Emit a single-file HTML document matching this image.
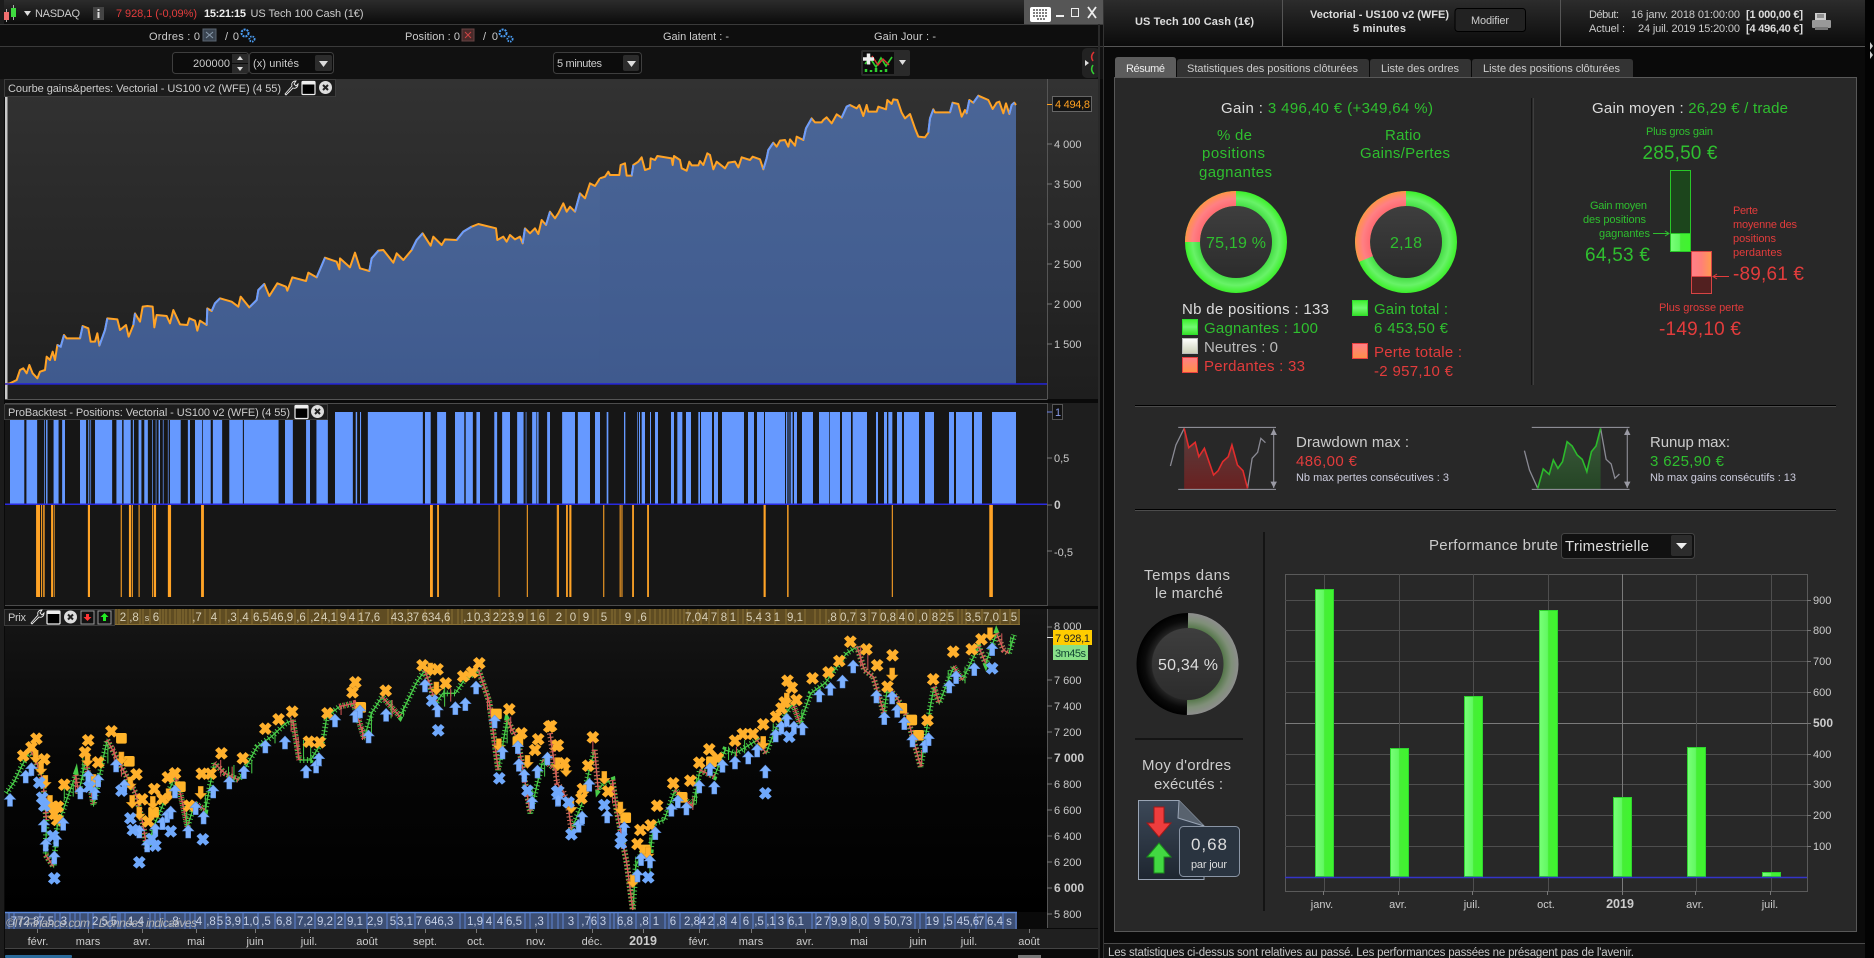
<!DOCTYPE html>
<html lang="fr"><head><meta charset="utf-8"><title>ProBacktest</title>
<style>
html,body{margin:0;padding:0;background:#0a0a0a;overflow:hidden}
svg{display:block}
text{font-family:"Liberation Sans",Arial,sans-serif;font-size:11px;fill:#ccc}
.s11{font-size:11px}.s14{font-size:15px}.s15{font-size:16px}.s19{font-size:19px}
.b{font-weight:bold}.g{fill:#2fbf2f}.r{fill:#e23c3c}.w{fill:#ddd}.o{fill:#ffa020}
.ax{fill:#c9c9c9;font-size:11px}.bt{fill:#d8d0b8;font-size:11.5px;text-anchor:middle}.bb{fill:#c4cfe6;font-size:11.5px;text-anchor:middle}
.m{text-anchor:middle}
.ns{vector-effect:non-scaling-stroke}
</style></head><body>
<svg xmlns="http://www.w3.org/2000/svg" width="1874" height="958" viewBox="0 0 1874 958">
<defs>
<linearGradient id="hd" x1="0" y1="0" x2="0" y2="1"><stop offset="0" stop-color="#2c2c2c"/><stop offset="1" stop-color="#0b0b0b"/></linearGradient>
<linearGradient id="p1" x1="0" y1="0" x2="0" y2="1"><stop offset="0" stop-color="#323232"/><stop offset="1" stop-color="#1e1e1e"/></linearGradient>
<linearGradient id="p3" x1="0" y1="0" x2="0" y2="1"><stop offset="0" stop-color="#161616"/><stop offset=".5" stop-color="#060606"/><stop offset="1" stop-color="#000"/></linearGradient>
<linearGradient id="ar" x1="0" y1="0" x2="0" y2="1"><stop offset="0" stop-color="#4a6596"/><stop offset="1" stop-color="#3f5a8e"/></linearGradient>
<linearGradient id="bar" x1="0" y1="0" x2="1" y2="0"><stop offset="0" stop-color="#78ff78"/><stop offset=".45" stop-color="#62f862"/><stop offset=".5" stop-color="#46ee36"/><stop offset="1" stop-color="#3ff52e"/></linearGradient>
<linearGradient id="rb" x1="0" y1="0" x2="1" y2="0"><stop offset="0" stop-color="#ff8088"/><stop offset=".5" stop-color="#ff8078"/><stop offset="1" stop-color="#ff9a50"/></linearGradient>
<linearGradient id="sqg" x1="0" y1="0" x2="0" y2="1"><stop offset="0" stop-color="#3ff02e"/><stop offset=".5" stop-color="#72f872"/><stop offset="1" stop-color="#38e028"/></linearGradient>
<linearGradient id="sqw" x1="0" y1="0" x2="0" y2="1"><stop offset="0" stop-color="#fff"/><stop offset="1" stop-color="#ccd0b8"/></linearGradient>
<linearGradient id="sqr" x1="0" y1="0" x2="0" y2="1"><stop offset="0" stop-color="#ff8088"/><stop offset="1" stop-color="#ff9048"/></linearGradient>
<radialGradient id="dg" gradientUnits="userSpaceOnUse" cx="0" cy="0" r="51"><stop offset=".7" stop-color="#44dc44"/><stop offset=".85" stop-color="#68f268"/><stop offset="1" stop-color="#3cf02a"/></radialGradient>
<radialGradient id="dr" gradientUnits="userSpaceOnUse" cx="0" cy="0" r="51"><stop offset=".7" stop-color="#ff6a72"/><stop offset=".85" stop-color="#ff8084"/><stop offset="1" stop-color="#ff9448"/></radialGradient>
<radialGradient id="dk" gradientUnits="userSpaceOnUse" cx="0" cy="0" r="51"><stop offset=".7" stop-color="#252525"/><stop offset=".85" stop-color="#0a0a0a"/><stop offset="1" stop-color="#000"/></radialGradient>
<radialGradient id="dm" gradientUnits="userSpaceOnUse" cx="0" cy="0" r="51"><stop offset=".7" stop-color="#55774a"/><stop offset=".85" stop-color="#7f8f78"/><stop offset="1" stop-color="#8e8e8e"/></radialGradient>
<linearGradient id="in" x1="0" y1="0" x2="0" y2="1"><stop offset="0" stop-color="#3e3e3e"/><stop offset="1" stop-color="#2c2c2c"/></linearGradient>
<linearGradient id="ddf" x1="0" y1="0" x2="0" y2="1"><stop offset="0" stop-color="#554040"/><stop offset="1" stop-color="#6a2020"/></linearGradient>
<linearGradient id="ruf" x1="0" y1="0" x2="0" y2="1"><stop offset="0" stop-color="#3c5a3c"/><stop offset="1" stop-color="#254525"/></linearGradient>
<linearGradient id="doc" x1="0" y1="0" x2="0" y2="1"><stop offset="0" stop-color="#3c4858"/><stop offset="1" stop-color="#1e2630"/></linearGradient>
<path id="ox" d="M-8-9L8 9M-8 9L8-9" stroke="#ffb02c" stroke-width="14" stroke-linecap="square" fill="none"/>
<path id="bx" d="M-8-9L8 9M-8 9L8-9" stroke="#6fa8fb" stroke-width="14" stroke-linecap="square" fill="none"/>
<path id="up" d="M0-20L16-2H7V19H-7V-2H-16Z" fill="#7db1ff" stroke="#5a8fe0" stroke-width="1.500"/>
<path id="dn" d="M0 20L16 2H7V-19H-7V2H-16Z" fill="#ffb02c" stroke="#d8941c" stroke-width="1.500"/>
<rect id="sq" x="-15" y="-16" width="30" height="32" rx="5" fill="#ffb42a"/>
<g id="cl"><circle r="6.500" fill="#ddd"/><path d="M-2.500-2.500L2.500 2.500M-2.500 2.500L2.500-2.500" stroke="#222" stroke-width="2"/></g>
<g id="wn"><rect x="-6.500" y="-6.500" width="13" height="13" rx="1" fill="#000" stroke="#eee" stroke-width="1.200"/><rect x="-6.500" y="-6.500" width="13" height="3" fill="#eee"/></g>
<path id="wr" d="M-6 6L1-2C0-5 2-7 5-7L3-4 5-2 7-4C7-1 5 1 2 0L-5 7Z" fill="none" stroke="#eee" stroke-width=".9"/>
<g id="ge"><circle cx="-3" cy="-2" r="3.500" fill="none" stroke="#4a9cf2" stroke-width="2" stroke-dasharray="2 1"/><circle cx="4" cy="4" r="2.600" fill="none" stroke="#4a9cf2" stroke-width="1.800" stroke-dasharray="1.500 1"/></g>
</defs>

<rect width="1874" height="958" fill="#0a0a0a"/>

<!-- LEFT WINDOW -->
<rect x="0" y="0" width="1104" height="24" fill="url(#hd)"/>
<rect x="0" y="0" width="4" height="958" fill="#1c1c1c"/>
<path d="M6.500 9V22M13.500 5V20" stroke="#aaa"/><rect x="4" y="12" width="5" height="8" fill="#f07070"/><rect x="11" y="8" width="5" height="9" fill="#3fd93f"/>
<path d="M24 11h7l-3.500 5z" fill="#ddd"/>
<text x="35" y="17" class="s11" textLength="45">NASDAQ</text>
<rect x="93" y="7" width="11" height="13" fill="#444"/><rect x="97.500" y="9" width="2" height="2" fill="#ddd"/><rect x="97.500" y="12" width="2" height="6" fill="#ddd"/>
<text x="116" y="17" class="s11 r" textLength="81">7 928,1 (-0,09%)</text>
<text x="204" y="17" class="s11 b" textLength="42" style="fill:#eee">15:21:15</text>
<text x="250.500" y="17" class="s11" textLength="113">US Tech 100 Cash (1€)</text>
<rect x="1024" y="0" width="80" height="24" fill="#565656"/>
<rect x="1030" y="7" width="21" height="15" rx="2" fill="#fff"/><path d="M1033 10h15M1033 13h15M1033 16h15M1037 19h8" stroke="#555" stroke-width="1.500" stroke-dasharray="2 1"/>
<rect x="1056" y="15" width="8" height="2" fill="#eee"/><rect x="1071.500" y="8.500" width="7" height="8" fill="none" stroke="#eee"/>
<path d="M1088 7L1096 18M1096 7L1088 18" stroke="#eee" stroke-width="1.800"/>

<path d="M0 24.500H1104M0 46.500H1104" stroke="#3a3a3a"/>
<rect x="0" y="25" width="1104" height="21" fill="#0e0e0e"/>
<rect x="0" y="47" width="1104" height="32" fill="#111"/>
<text x="149" y="40" textLength="51">Ordres : 0</text>
<rect x="203" y="29" width="13" height="12" fill="#3a4450" stroke="#5a6470"/><path d="M206 32l7 6M213 32l-7 6" stroke="#89a"/>
<text x="225" y="40" textLength="14">/ 0</text><use href="#ge" x="248" y="35"/>
<text x="405" y="40" textLength="55">Position : 0</text>
<rect x="462" y="29" width="12" height="12" fill="#4a2a2a" stroke="#644"/><path d="M465 32l6 6M471 32l-6 6" stroke="#c44"/>
<text x="483" y="40" textLength="15">/ 0</text><use href="#ge" x="506" y="35"/>
<text x="663" y="40" textLength="66">Gain latent : -</text>
<text x="874" y="40" textLength="62">Gain Jour : -</text>

<rect x="172.500" y="52.500" width="76" height="21" rx="3" fill="#0c0c0c" stroke="#3e3e3e"/>
<text x="193" y="67" textLength="37">200000</text>
<rect x="232" y="54" width="16" height="9" fill="#2a2a2a"/><rect x="232" y="64" width="16" height="9" fill="#2a2a2a"/>
<path d="M237 60l3-4 3 4zM237 67l3 4 3-4z" fill="#ddd"/>
<rect x="249.500" y="52.500" width="84" height="21" rx="3" fill="#0c0c0c" stroke="#3e3e3e"/>
<text x="253" y="67" textLength="46">(x) unités</text>
<rect x="315" y="55" width="17" height="16" rx="2" fill="#2c2c2c"/><path d="M319 61h9l-4.500 6z" fill="#ddd"/>
<rect x="553.500" y="52.500" width="88" height="21" rx="3" fill="#0c0c0c" stroke="#3e3e3e"/>
<text x="557" y="67" textLength="45">5 minutes</text>
<rect x="623" y="55" width="16" height="16" rx="2" fill="#2c2c2c"/><path d="M627 61h9l-4.500 6z" fill="#ddd"/>
<rect x="861" y="50" width="49" height="26" rx="2" fill="#2a2a2a"/>
<rect x="863" y="52" width="31" height="22" fill="#0c0c0c"/>
<path d="M865 64l5-6 6 9 5-9 5 8 6-9" stroke="#2fcf2f" fill="none" stroke-width="1.600"/><path d="M872 56l6 9 5-6 6 6" stroke="#d33" fill="none" stroke-width="1.400"/>
<path d="M866 72v-3M871 72v-2M876 72v-4M881 72v-2M886 72v-3" stroke="#2fcf2f" stroke-width="2.500"/>
<path d="M863 59h11M868.500 53.500v11" stroke="#eee" stroke-width="3.500"/>
<path d="M899 60h7l-3.500 5z" fill="#ddd"/>
<rect x="1082" y="48" width="18" height="30" rx="5" fill="#222"/>
<path d="M1089 63l-4-3v6z" fill="#ddd"/><path d="M1094 52c-3 3-3 6-1 9" stroke="#d33" fill="none" stroke-width="1.500"/><path d="M1094 74c-3-3-3-6-1-9" stroke="#3c3" fill="none" stroke-width="1.500"/>

<!-- CHART 1 -->
<rect x="5" y="79" width="1093" height="320" fill="url(#p1)"/>
<rect x="5" y="97" width="2.500" height="302" fill="#c8c8c8"/>
<path d="M1047.500 79V399M5 399.500H1047.500" stroke="#555" fill="none"/>
<g transform="translate(0,80) scale(.33333)">
<polygon fill="url(#ar)" points="15,913 30,910 50,900 60,870 70,865 80,880 88,855 98,880 112,895 120,875 135,870 140,830 150,840 158,815 165,840 172,795 182,800 192,765 200,775 240,775 248,738 265,745 272,785 285,785 292,760 298,797 315,750 322,715 352,718 360,750 378,735 386,770 400,735 405,700 420,725 428,680 442,678 458,680 463,742 470,705 500,708 510,730 520,690 540,733 562,735 568,715 585,722 592,752 600,722 620,735 622,685 635,693 645,670 660,655 695,665 715,680 722,650 748,682 770,660 775,630 793,612 808,648 832,610 858,620 862,632 877,592 918,603 925,578 950,592 975,533 1010,545 1018,568 1020,535 1050,562 1065,518 1080,565 1108,573 1115,535 1135,512 1150,510 1180,548 1190,520 1210,540 1235,510 1250,480 1268,460 1292,497 1300,470 1325,495 1335,478 1370,480 1390,455 1415,440 1435,432 1488,445 1492,480 1510,470 1520,485 1530,465 1545,478 1560,470 1568,490 1575,445 1590,460 1605,445 1615,462 1625,420 1638,435 1650,395 1665,415 1675,400 1690,370 1700,395 1710,380 1725,395 1740,340 1755,355 1770,310 1785,318 1800,295 1800,913"/>
<polyline fill="none" stroke="#ffa326" stroke-width="6" stroke-linejoin="round" points="15,913 30,910 50,900 60,870 70,865 80,880 88,855 98,880 112,895 120,875 135,870 140,830 150,840 158,815 165,840 172,795 182,800 192,765 200,775 240,775 248,738 265,745 272,785 285,785 292,760 298,797 315,750 322,715 352,718 360,750 378,735 386,770 400,735 405,700 420,725 428,680 442,678 458,680 463,742 470,705 500,708 510,730 520,690 540,733 562,735 568,715 585,722 592,752 600,722 620,735 622,685 635,693 645,670 660,655 695,665 715,680 722,650 748,682 770,660 775,630 793,612 808,648 832,610 858,620 862,632 877,592 918,603 925,578 950,592 975,533 1010,545 1018,568 1020,535 1050,562 1065,518 1080,565 1108,573 1115,535 1135,512 1150,510 1180,548 1190,520 1210,540 1235,510 1250,480 1268,460 1292,497 1300,470 1325,495 1335,478 1370,480 1390,455 1415,440 1435,432 1488,445 1492,480 1510,470 1520,485 1530,465 1545,478 1560,470 1568,490 1575,445 1590,460 1605,445 1615,462 1625,420 1638,435 1650,395 1665,415 1675,400 1690,370 1700,395 1710,380 1725,395 1740,340 1755,355 1770,310 1785,318 1800,295"/>
<path fill="none" stroke="#6a9cff" stroke-width="6" d="M172 795L182 800 192 765M240 775L248 738M298 797L315 750 322 715M400 735L405 700M620 735L622 685M635 693L645 670 660 655M750 680L770 660 775 630 793 612M950 592L975 533M1108 573L1115 535 1135 512M1235 510L1250 480 1268 460M1370 480L1390 455 1415 440M1568 490L1575 445M1638 435L1650 395M1725 395L1740 340"/>
<polygon transform="translate(1800,0)" fill="url(#ar)" points="0,295 15,290 25,275 30,285 58,285 62,255 75,250 80,287 95,287 100,255 115,245 125,232 135,270 150,265 152,235 165,240 172,228 215,235 218,255 222,228 240,240 245,265 260,272 268,245 275,256 295,256 300,243 310,255 322,220 330,225 340,268 350,245 375,265 385,248 405,245 415,262 425,232 450,240 458,230 480,238 490,268 500,235 505,210 520,188 530,200 540,182 555,180 565,200 570,178 585,197 590,170 610,180 618,145 635,115 645,127 665,127 670,120 680,112 695,130 710,103 725,113 740,80 750,75 770,85 778,75 790,108 800,75 805,95 830,95 835,80 858,88 862,60 875,72 880,58 892,60 905,98 915,115 930,102 945,145 955,170 975,172 985,158 990,115 1000,88 1005,97 1050,97 1058,68 1075,72 1085,110 1095,90 1100,100 1108,60 1120,68 1135,47 1165,60 1178,87 1190,68 1198,65 1210,100 1218,70 1228,102 1235,75 1243,68 1248,75 1248,913 0,913"/>
<polyline transform="translate(1800,0)" fill="none" stroke="#ffa326" stroke-width="6" stroke-linejoin="round" points="0,295 15,290 25,275 30,285 58,285 62,255 75,250 80,287 95,287 100,255 115,245 125,232 135,270 150,265 152,235 165,240 172,228 215,235 218,255 222,228 240,240 245,265 260,272 268,245 275,256 295,256 300,243 310,255 322,220 330,225 340,268 350,245 375,265 385,248 405,245 415,262 425,232 450,240 458,230 480,238 490,268 500,235 505,210 520,188 530,200 540,182 555,180 565,200 570,178 585,197 590,170 610,180 618,145 635,115 645,127 665,127 670,120 680,112 695,130 710,103 725,113 740,80 750,75 770,85 778,75 790,108 800,75 805,95 830,95 835,80 858,88 862,60 875,72 880,58 892,60 905,98 915,115 930,102 945,145 955,170 975,172 985,158 990,115 1000,88 1005,97 1050,97 1058,68 1075,72 1085,110 1095,90 1100,100 1108,60 1120,68 1135,47 1165,60 1178,87 1190,68 1198,65 1210,100 1218,70 1228,102 1235,75 1243,68 1248,75"/>
<path transform="translate(1800,0)" fill="none" stroke="#6a9cff" stroke-width="6" d="M95 287L100 255M490 268L500 235 505 210 520 188M610 180L618 145 635 115M725 113L740 80 750 75M985 158L990 115 1000 88M1050 97L1058 68M1100 100L1108 60M1120 68L1135 47M1228 102L1235 75 1243 68"/>
</g>
<rect x="5" y="383.200" width="1042" height="1.500" fill="#2424d8"/>
<rect x="4.500" y="79.500" width="331" height="17" fill="#1c1c1c" stroke="#3c3c3c"/>
<text x="8" y="92" textLength="273">Courbe gains&amp;pertes: Vectorial - US100 v2 (WFE) (4 55)</text>
<use href="#wr" x="291" y="88"/><use href="#wn" x="308.500" y="88"/><use href="#cl" x="325.500" y="87.500"/>
<path d="M1047 144h5M1047 184h5M1047 224h5M1047 264h5M1047 304h5M1047 344h5" stroke="#777"/>
<text x="1054" y="148" class="ax">4 000</text><text x="1054" y="188" class="ax">3 500</text><text x="1054" y="228" class="ax">3 000</text><text x="1054" y="268" class="ax">2 500</text><text x="1054" y="308" class="ax">2 000</text><text x="1054" y="348" class="ax">1 500</text>
<path d="M1047 104.500h5" stroke="#ffa020"/>
<rect x="1052.500" y="96.500" width="39" height="15" fill="#141414" stroke="#666"/>
<text x="1055" y="108" class="o" textLength="35">4 494,8</text>

<!-- CHART 2 -->
<rect x="5" y="403" width="1043" height="203" fill="#161616"/>
<rect x="1048" y="403" width="50" height="203" fill="#1e1e1e"/>
<path d="M5 403.500H1047.500V605.500H5" stroke="#4c4c4c" fill="none"/>
<g transform="scale(.35714,1)" fill="none" stroke="#6699ff" stroke-width="92">
<path d="M28 458H68M74 458H104M124 458H126M129 458H133M150 458H164M174 458H182M224 458H241M247 458H250M253 458H255M266 458H314M326 458H342M346 458H366M372 458H375M388 458H396M404 458H414M426 458H428M436 458H438M444 458H448M456 458H458M470 458H472M476 458H506M526 458H532M546 458H566M568 458H590M596 458H622M642 458H680M683 458H780M798 458H820M857 458H868M886 458H918M938 458H988M996 458H1000M1008 458H1011M1030 458H1184M1190 458H1206M1224 458H1249M1274 458H1300M1304 458H1324M1334 458H1344M1384 458H1392M1406 458H1428M1448 458H1466M1472 458H1474M1490 458H1502M1504 458H1508M1532 458H1540M1574 458H1610M1618 458H1652M1666 458H1680"/>
</g>
<g transform="translate(600,0) scale(.33333,1)" fill="none" stroke="#6699ff" stroke-width="92">
<path d="M20 458H25M72 458H76M112 458H114M117 458H120M125 458H135M150 458H153M165 458H174M213 458H222M232 458H247M258 458H273M295 458H300M303 458H336M342 458H354M366 458H432M444 458H462M471 458H492M495 458H555M558 458H562M566 458H568M572 458H578M582 458H591M606 458H639M657 458H688M690 458H720M726 458H753M758 458H801M828 458H834M852 458H861M865 458H877M891 458H906M912 458H957M975 458H1002M1047 458H1062M1068 458H1116M1122 458H1146M1176 458H1248"/>
</g>
<g transform="scale(.35714,1)" fill="none" stroke="#ffa326" stroke-width="92">
<path d="M101 551H112M115 551H118M121 551H125M143 551H149M151 551H153M246 551H252M338 551H341M361 551H367M369 551H372M388 551H391M426 551H429M431 551H437M470 551H479M563 551H571M1204 551H1212M1224 551H1229M1396 551H1399M1475 551H1478M1562 551H1565"/>
</g>
<g transform="translate(550,0) scale(.35714,1)" fill="none" stroke="#ffa326" stroke-width="92">
<path d="M19 551H22M45 551H50M54 551H60M149 551H152M195 551H198M200 551H203M230 551H235M272 551H277M598 551H604M664 551H668M957 551H960M1230 551H1240"/>
</g>
<rect x="5" y="503.500" width="1042" height="1.500" fill="#2a2ae0"/>
<rect x="4.500" y="404.500" width="323" height="15" fill="#1c1c1c" stroke="#3c3c3c"/>
<text x="8" y="416" textLength="282">ProBacktest - Positions: Vectorial - US100 v2 (WFE) (4 55)</text>
<use href="#wn" x="301.500" y="412"/><use href="#cl" x="317.500" y="411.500"/>
<rect x="1052.500" y="404.500" width="10" height="15" fill="#111" stroke="#555"/><text x="1055" y="416" style="fill:#8a9ce8">1</text>
<path d="M1047 412h5" stroke="#6a80e0"/>
<text x="1054" y="462" class="ax">0,5</text><text x="1054" y="509" class="ax b" style="font-size:12px">0</text><text x="1054" y="556" class="ax">-0,5</text>
<path d="M1047 458h5M1047 505h5M1047 551h5" stroke="#777"/>

<!-- CHART 3 -->
<rect x="5" y="609" width="1042" height="303" fill="url(#p3)"/>
<rect x="1048" y="609" width="50" height="319" fill="#1f1f1f"/>
<path d="M1047.500 609V928" stroke="#555"/>
<rect x="115" y="609" width="905" height="16" fill="#5f4c22"/>
<path d="M115 624.500H1020" stroke="#8a7034"/>
<path stroke="#8a7034" d="M116 609v16M119 609v16M128 609v16M140 609v16M143 609v16M150 609v16M160 609v16M163 609v16M166 609v16M170 609v16M175 609v16M178 609v16M180 609v16M183 609v16M186 609v16M190 609v16M193 609v16M205 609v16M210 609v16M220 609v16M226 609v16M238 609v16M252 609v16M270 609v16M295 609v16M308 609v16M322 609v16M337 609v16M348 609v16M358 609v16M362 609v16M388 609v16M392 609v16M408 609v16M425 609v16M448 609v16M452 609v16M458 609v16M462 609v16M475 609v16M490 609v16M500 609v16M510 609v16M527 609v16M538 609v16M548 609v16M566 609v16M579 609v16M593 609v16M598 609v16M612 609v16M615 609v16M620 609v16M635 609v16M650 609v16M655 609v16M660 609v16M664 609v16M668 609v16M673 609v16M676 609v16M680 609v16M684 609v16M688 609v16M698 609v16M701 609v16M709 609v16M718 609v16M728 609v16M738 609v16M743 609v16M747 609v16M760 609v16M775 609v16M786 609v16M805 609v16M815 609v16M820 609v16M826 609v16M840 609v16M856 609v16M869 609v16M880 609v16M897 609v16M906 609v16M916 609v16M930 609v16M940 609v16M947 609v16M958 609v16M962 609v16M966 609v16M982 609v16M1000 609v16M1010 609v16M1019 609v16"/>
<g><text class="bt" x="123" y="621">2</text><text class="bt" x="134" y="621">,8</text><text class="bt" x="147" y="621" style="font-size:9px">s</text><text class="bt" x="156" y="621">6</text><text class="bt" x="197" y="621">,7</text><text class="bt" x="214" y="621">4</text><text class="bt" x="232" y="621">,3</text><text class="bt" x="244" y="621">,4</text><text class="bt" x="261" y="621">6,5</text><text class="bt" x="282" y="621">46,9</text><text class="bt" x="301" y="621">,6</text><text class="bt" x="315" y="621">,2</text><text class="bt" x="329" y="621">4,1</text><text class="bt" x="343" y="621">9</text><text class="bt" x="352" y="621">4</text><text class="bt" x="369" y="621">17,6</text><text class="bt" x="402" y="621">43,3</text><text class="bt" x="416" y="621">7</text><text class="bt" x="436" y="621">634,6</text><text class="bt" x="468" y="621">,1</text><text class="bt" x="482" y="621">0,3</text><text class="bt" x="496" y="621">2</text><text class="bt" x="504" y="621">2</text><text class="bt" x="516" y="621">3,9</text><text class="bt" x="533" y="621">1</text><text class="bt" x="542" y="621">6</text><text class="bt" x="559" y="621">2</text><text class="bt" x="573" y="621">0</text><text class="bt" x="586" y="621">9</text><text class="bt" x="604" y="621">5</text><text class="bt" x="628" y="621">9</text><text class="bt" x="642" y="621">,6</text><text class="bt" x="693" y="621">7,0</text><text class="bt" x="705" y="621">4</text><text class="bt" x="714" y="621">7</text><text class="bt" x="724" y="621">8</text><text class="bt" x="733" y="621">1</text><text class="bt" x="754" y="621">5,4</text><text class="bt" x="768" y="621">3</text><text class="bt" x="777" y="621">1</text><text class="bt" x="795" y="621">9,1</text><text class="bt" x="832" y="621">,8</text><text class="bt" x="848" y="621">0,7</text><text class="bt" x="863" y="621">3</text><text class="bt" x="874" y="621">7</text><text class="bt" x="888" y="621">0,8</text><text class="bt" x="902" y="621">4</text><text class="bt" x="911" y="621">0</text><text class="bt" x="923" y="621">,0</text><text class="bt" x="935" y="621">8</text><text class="bt" x="943" y="621">2</text><text class="bt" x="951" y="621">5</text><text class="bt" x="973" y="621">3,5</text><text class="bt" x="991" y="621">7,0</text><text class="bt" x="1005" y="621">1</text><text class="bt" x="1014" y="621">5</text></g>
<rect x="4.500" y="609.500" width="110" height="16" fill="#1c1c1c" stroke="#3c3c3c"/>
<text x="8" y="621" textLength="18">Prix</text>
<use href="#wr" x="37" y="617"/><use href="#wn" x="53.500" y="617.500"/><use href="#cl" x="70.500" y="617"/>
<rect x="81" y="611" width="13" height="13" fill="#111" stroke="#999"/><path d="M87.500 621l4-4h-2.500v-3h-3v3h-2.500z" fill="#f33"/>
<rect x="98" y="611" width="13" height="13" fill="#111" stroke="#999"/><path d="M104.500 613l4 4h-2.500v4h-3v-4h-2.500z" fill="#2e2"/>

<g transform="translate(0,660) scale(.35714,.33333)">
<polyline class="ns" fill="none" stroke="#48cc48" stroke-width="1.300" points="18,400 40,365 60,320 85,270 100,300 120,360 130,480 128,585 150,620 160,500 175,455 200,380 212,345 220,400 240,300 262,435 280,340 300,240 320,280 345,330 380,400 400,490 412,570 430,500 470,400 490,350 505,400 525,500 545,430 575,450 600,310 630,340 668,360 720,260 760,230 800,190 820,180 838,300 870,300 905,240 915,170 950,140 990,130 1020,235 1040,160 1070,110 1120,170 1165,70 1190,30 1220,130 1240,100 1275,100 1300,60 1340,30 1370,125 1395,330 1420,180 1450,240 1485,460 1520,300 1560,330"/>
<polyline class="ns" fill="none" stroke="#48cc48" stroke-width="6" stroke-dasharray="1 2.600" points="18,400 40,365 60,320 85,270 100,300 120,360 130,480 128,585 150,620 160,500 175,455 200,380 212,345 220,400 240,300 262,435 280,340 300,240 320,280 345,330 380,400 400,490 412,570 430,500 470,400 490,350 505,400 525,500 545,430 575,450 600,310 630,340 668,360 720,260 760,230 800,190 820,180 838,300 870,300 905,240 915,170 950,140 990,130 1020,235 1040,160 1070,110 1120,170 1165,70 1190,30 1220,130 1240,100 1275,100 1300,60 1340,30 1370,125 1395,330 1420,180 1450,240 1485,460 1520,300 1560,330"/>
<path class="ns" fill="none" stroke="#d85858" stroke-width="1.300" d="M85 270L100 300 120 360 130 480M128 585L150 620M212 345L220 400M240 300L262 435M300 240L320 280 345 330 380 400 400 490 412 570M490 350L505 400 525 500M545 430L575 450M600 310L630 340 668 360M820 180L838 300M950 140L990 130 1020 235M1070 110L1120 170M1190 30L1220 130M1340 30L1370 125 1395 330M1420 180L1450 240 1485 460M1520 300L1560 330"/>
<path class="ns" fill="none" stroke="#d85858" stroke-width="6" stroke-dasharray="1 2.600" d="M85 270L100 300 120 360 130 480M128 585L150 620M212 345L220 400M240 300L262 435M300 240L320 280 345 330 380 400 400 490 412 570M490 350L505 400 525 500M545 430L575 450M600 310L630 340 668 360M820 180L838 300M950 140L990 130 1020 235M1070 110L1120 170M1190 30L1220 130M1340 30L1370 125 1395 330M1420 180L1450 240 1485 460M1520 300L1560 330"/>
<path class="ns" fill="none" stroke="#48cc48" stroke-width="1" d="M180 380V420M205 370V410M232 290V360M262 380V440M302 250V310M522 430V510M575 400V450M640 320V370M655 315V365M705 300V340M770 215V250M850 240V300M870 250V310M1040 155V220M1095 120V175M1130 140V170M1245 70V140M1420 130V250M1490 380V430M1525 290V350"/>
<path class="ns" fill="none" stroke="#d85858" stroke-width="1" d="M212 345V400M320 260V310M340 280V350M618 300V350M650 320V360M815 170V215M835 230V300M955 135V165M1015 200V240M1098 120V170M1262 85V125M1365 100V150M1430 170V220M1558 300V370"/>
<g>
<use href="#sq" x="340" y="235"/><use href="#sq" x="362" y="304"/><use href="#sq" x="505" y="380"/><use href="#sq" x="1010" y="142"/><use href="#sq" x="1390" y="162"/><use href="#sq" x="1450" y="245"/><use href="#sq" x="430" y="457"/>
<use href="#dn" x="100" y="290"/><use href="#dn" x="115" y="325"/><use href="#dn" x="127" y="365"/><use href="#dn" x="245" y="300"/><use href="#dn" x="340" y="295"/><use href="#dn" x="365" y="370"/><use href="#dn" x="370" y="425"/><use href="#dn" x="428" y="428"/><use href="#dn" x="472" y="405"/><use href="#dn" x="562" y="398"/><use href="#dn" x="1205" y="28"/><use href="#dn" x="1222" y="85"/><use href="#dn" x="1397" y="255"/><use href="#dn" x="1477" y="305"/><use href="#dn" x="390" y="460"/><use href="#dn" x="1560" y="312"/><use href="#dn" x="140" y="425"/><use href="#dn" x="262" y="362"/>
<use href="#ox" x="102" y="236"/><use href="#ox" x="88" y="262"/><use href="#ox" x="65" y="287"/><use href="#ox" x="124" y="298"/><use href="#ox" x="180" y="374"/><use href="#ox" x="247" y="241"/><use href="#ox" x="238" y="277"/><use href="#ox" x="275" y="307"/><use href="#ox" x="312" y="214"/><use href="#ox" x="382" y="343"/><use href="#ox" x="432" y="387"/><use href="#ox" x="398" y="418"/><use href="#ox" x="490" y="340"/><use href="#ox" x="470" y="352"/><use href="#ox" x="455" y="417"/><use href="#ox" x="415" y="484"/><use href="#ox" x="530" y="437"/><use href="#ox" x="565" y="341"/><use href="#ox" x="590" y="341"/><use href="#ox" x="620" y="280"/><use href="#ox" x="680" y="295"/><use href="#ox" x="743" y="206"/><use href="#ox" x="780" y="178"/><use href="#ox" x="818" y="155"/><use href="#ox" x="865" y="245"/><use href="#ox" x="895" y="247"/><use href="#ox" x="917" y="160"/><use href="#ox" x="995" y="67"/><use href="#ox" x="987" y="97"/><use href="#ox" x="1080" y="92"/><use href="#ox" x="1183" y="16"/><use href="#ox" x="1225" y="28"/><use href="#ox" x="1248" y="70"/><use href="#ox" x="1297" y="49"/><use href="#ox" x="1322" y="37"/><use href="#ox" x="1342" y="10"/><use href="#ox" x="1426" y="148"/><use href="#ox" x="1460" y="220"/><use href="#ox" x="1507" y="238"/><use href="#ox" x="1498" y="270"/><use href="#ox" x="1538" y="200"/><use href="#ox" x="1558" y="258"/><use href="#ox" x="150" y="440"/><use href="#ox" x="162" y="440"/><use href="#ox" x="152" y="462"/><use href="#ox" x="160" y="480"/>
<use href="#up" x="28" y="420"/><use href="#up" x="72" y="350"/><use href="#up" x="88" y="328"/><use href="#up" x="123" y="497"/><use href="#up" x="128" y="555"/><use href="#up" x="152" y="593"/><use href="#up" x="157" y="540"/><use href="#up" x="177" y="492"/><use href="#up" x="225" y="398"/><use href="#up" x="247" y="350"/><use href="#up" x="265" y="400"/><use href="#up" x="275" y="362"/><use href="#up" x="325" y="317"/><use href="#up" x="348" y="378"/><use href="#up" x="390" y="515"/><use href="#up" x="412" y="557"/><use href="#up" x="435" y="510"/><use href="#up" x="455" y="490"/><use href="#up" x="468" y="468"/><use href="#up" x="478" y="458"/><use href="#up" x="490" y="395"/><use href="#up" x="527" y="515"/><use href="#up" x="548" y="445"/><use href="#up" x="570" y="473"/><use href="#up" x="597" y="395"/><use href="#up" x="642" y="368"/><use href="#up" x="683" y="337"/><use href="#up" x="743" y="260"/><use href="#up" x="798" y="248"/><use href="#up" x="857" y="335"/><use href="#up" x="885" y="320"/><use href="#up" x="893" y="298"/><use href="#up" x="938" y="182"/><use href="#up" x="995" y="168"/><use href="#up" x="1008" y="155"/><use href="#up" x="1032" y="230"/><use href="#up" x="1081" y="165"/><use href="#up" x="1190" y="77"/><use href="#up" x="1225" y="152"/><use href="#up" x="1275" y="145"/><use href="#up" x="1303" y="133"/><use href="#up" x="1333" y="83"/><use href="#up" x="1385" y="185"/><use href="#up" x="1407" y="278"/><use href="#up" x="1450" y="262"/><use href="#up" x="1453" y="315"/><use href="#up" x="1468" y="347"/><use href="#up" x="1490" y="428"/><use href="#up" x="1505" y="335"/><use href="#up" x="1533" y="296"/><use href="#up" x="1562" y="420"/>
<use href="#bx" x="110" y="368"/><use href="#bx" x="118" y="413"/><use href="#bx" x="124" y="437"/><use href="#bx" x="148" y="528"/><use href="#bx" x="152" y="655"/><use href="#bx" x="250" y="380"/><use href="#bx" x="340" y="392"/><use href="#bx" x="365" y="475"/><use href="#bx" x="372" y="510"/><use href="#bx" x="390" y="607"/><use href="#bx" x="425" y="537"/><use href="#bx" x="435" y="557"/><use href="#bx" x="478" y="514"/><use href="#bx" x="568" y="538"/><use href="#bx" x="1210" y="122"/><use href="#bx" x="1227" y="211"/><use href="#bx" x="1398" y="355"/><use href="#bx" x="1477" y="392"/><use href="#bx" x="1560" y="395"/>
</g></g>

<g transform="translate(550,590) scale(.35714,.33333)">
<polyline class="ns" fill="none" stroke="#48cc48" stroke-width="1.300" points="0,430 20,580 35,600 50,640 60,720 90,640 110,540 125,480 135,600 150,580 175,570 185,650 215,820 232,960 240,830 260,780 282,780 290,700 320,690 350,600 400,650 420,540 460,560 490,480 520,490 580,450 605,490 630,420 680,340 700,400 730,310 770,280 830,190 860,170 880,240 905,260 935,370 945,290 975,330 1000,380 1038,530 1065,350 1075,290 1090,340 1130,230 1155,270 1200,170 1220,220 1250,130 1270,180 1285,190 1300,135"/>
<polyline class="ns" fill="none" stroke="#48cc48" stroke-width="6" stroke-dasharray="1 2.600" points="0,430 20,580 35,600 50,640 60,720 90,640 110,540 125,480 135,600 150,580 175,570 185,650 215,820 232,960 240,830 260,780 282,780 290,700 320,690 350,600 400,650 420,540 460,560 490,480 520,490 580,450 605,490 630,420 680,340 700,400 730,310 770,280 830,190 860,170 880,240 905,260 935,370 945,290 975,330 1000,380 1038,530 1065,350 1075,290 1090,340 1130,230 1155,270 1200,170 1220,220 1250,130 1270,180 1285,190 1300,135"/>
<path class="ns" fill="none" stroke="#d85858" stroke-width="1.300" d="M0 430L20 580 35 600 50 640 60 720M125 480L135 600M175 570L185 650 215 820 232 960M350 600L400 650M420 540L460 560M580 450L605 490M680 340L700 400M860 170L880 240 905 260 935 370M945 290L975 330 1000 380 1038 530M1075 290L1090 340M1130 230L1155 270M1200 170L1220 220M1250 130L1270 180 1285 190"/>
<path class="ns" fill="none" stroke="#d85858" stroke-width="6" stroke-dasharray="1 2.600" d="M0 430L20 580 35 600 50 640 60 720M125 480L135 600M175 570L185 650 215 820 232 960M350 600L400 650M420 540L460 560M580 450L605 490M680 340L700 400M860 170L880 240 905 260 935 370M945 290L975 330 1000 380 1038 530M1075 290L1090 340M1130 230L1155 270M1200 170L1220 220M1250 130L1270 180 1285 190"/>
<path class="ns" fill="none" stroke="#48cc48" stroke-width="1" d="M240 800V860M280 740V850M410 560V640M500 470V510M545 450V490M625 400V450M705 360V400M1115 240V300M1162 230V280M1290 140V175"/>
<path class="ns" fill="none" stroke="#d85858" stroke-width="1" d="M120 450V490M175 570V640M400 620V660M522 470V500M870 170V230M890 180V240M1040 480V530M1265 130V170"/>
<use href="#sq" x="452" y="515"/><use href="#sq" x="370" y="622"/><use href="#sq" x="212" y="683"/><use href="#sq" x="266" y="780"/><use href="#sq" x="985" y="355"/><use href="#sq" x="1013" y="390"/><use href="#sq" x="1032" y="436"/>
<use href="#dn" x="22" y="522"/><use href="#dn" x="45" y="540"/><use href="#dn" x="60" y="650"/><use href="#dn" x="152" y="563"/><use href="#dn" x="197" y="655"/><use href="#dn" x="232" y="873"/><use href="#dn" x="597" y="458"/><use href="#dn" x="663" y="328"/><use href="#dn" x="958" y="253"/><use href="#dn" x="1232" y="132"/><use href="#dn" x="275" y="790"/>
<use href="#ox" x="3" y="408"/><use href="#ox" x="22" y="466"/><use href="#ox" x="40" y="520"/><use href="#ox" x="107" y="527"/><use href="#ox" x="120" y="442"/><use href="#ox" x="92" y="597"/><use href="#ox" x="88" y="625"/><use href="#ox" x="163" y="604"/><use href="#ox" x="245" y="762"/><use href="#ox" x="253" y="720"/><use href="#ox" x="282" y="706"/><use href="#ox" x="300" y="647"/><use href="#ox" x="345" y="580"/><use href="#ox" x="393" y="572"/><use href="#ox" x="418" y="518"/><use href="#ox" x="446" y="478"/><use href="#ox" x="470" y="505"/><use href="#ox" x="518" y="452"/><use href="#ox" x="540" y="432"/><use href="#ox" x="568" y="432"/><use href="#ox" x="597" y="403"/><use href="#ox" x="633" y="380"/><use href="#ox" x="648" y="355"/><use href="#ox" x="657" y="337"/><use href="#ox" x="665" y="272"/><use href="#ox" x="677" y="293"/><use href="#ox" x="690" y="330"/><use href="#ox" x="735" y="265"/><use href="#ox" x="780" y="247"/><use href="#ox" x="810" y="213"/><use href="#ox" x="841" y="155"/><use href="#ox" x="886" y="178"/><use href="#ox" x="916" y="226"/><use href="#ox" x="945" y="290"/><use href="#ox" x="959" y="196"/><use href="#ox" x="1057" y="391"/><use href="#ox" x="1073" y="268"/><use href="#ox" x="1129" y="185"/><use href="#ox" x="1181" y="178"/><use href="#ox" x="1208" y="148"/>
<use href="#up" x="23" y="628"/><use href="#up" x="80" y="708"/><use href="#up" x="90" y="683"/><use href="#up" x="110" y="585"/><use href="#up" x="160" y="680"/><use href="#up" x="208" y="715"/><use href="#up" x="245" y="857"/><use href="#up" x="255" y="808"/><use href="#up" x="280" y="815"/><use href="#up" x="295" y="730"/><use href="#up" x="340" y="660"/><use href="#up" x="358" y="635"/><use href="#up" x="382" y="656"/><use href="#up" x="418" y="590"/><use href="#up" x="448" y="538"/><use href="#up" x="460" y="593"/><use href="#up" x="483" y="528"/><use href="#up" x="518" y="518"/><use href="#up" x="555" y="503"/><use href="#up" x="580" y="482"/><use href="#up" x="603" y="545"/><use href="#up" x="632" y="437"/><use href="#up" x="648" y="413"/><use href="#up" x="663" y="390"/><use href="#up" x="683" y="413"/><use href="#up" x="707" y="416"/><use href="#up" x="754" y="317"/><use href="#up" x="785" y="297"/><use href="#up" x="819" y="275"/><use href="#up" x="849" y="230"/><use href="#up" x="914" y="320"/><use href="#up" x="936" y="385"/><use href="#up" x="958" y="323"/><use href="#up" x="972" y="363"/><use href="#up" x="992" y="400"/><use href="#up" x="1015" y="452"/><use href="#up" x="1050" y="468"/><use href="#up" x="1060" y="448"/><use href="#up" x="1118" y="290"/><use href="#up" x="1137" y="262"/><use href="#up" x="1188" y="238"/><use href="#up" x="1238" y="178"/>
<use href="#bx" x="23" y="604"/><use href="#bx" x="52" y="637"/><use href="#bx" x="60" y="733"/><use href="#bx" x="152" y="645"/><use href="#bx" x="200" y="742"/><use href="#bx" x="198" y="760"/><use href="#bx" x="275" y="862"/><use href="#bx" x="603" y="610"/><use href="#bx" x="670" y="440"/><use href="#bx" x="1238" y="235"/>
</g>

<!-- bottom band -->
<rect x="5" y="912" width="1012" height="17" fill="#3d4f74"/>
<path d="M5 912.500H1017" stroke="#5a8ade" stroke-width="1.500"/>
<path stroke="#5f86d4" d="M9 912v17M14 912v17M40 912v17M55 912v17M60 912v17M70 912v17M75 912v17M80 912v17M88 912v17M93 912v17M110 912v17M118 912v17M120 912v17M125 912v17M150 912v17M155 912v17M160 912v17M165 912v17M185 912v17M190 912v17M195 912v17M205 912v17M218 912v17M226 912v17M243 912v17M258 912v17M275 912v17M295 912v17M315 912v17M335 912v17M345 912v17M367 912v17M387 912v17M397 912v17M415 912v17M460 912v17M465 912v17M483 912v17M494 912v17M505 912v17M525 912v17M530 912v17M548 912v17M552 912v17M558 912v17M563 912v17M578 912v17M590 912v17M598 912v17M610 912v17M614 912v17M618 912v17M636 912v17M650 912v17M665 912v17M669 912v17M680 912v17M700 912v17M714 912v17M726 912v17M740 912v17M753 912v17M766 912v17M775 912v17M788 912v17M812 912v17M816 912v17M830 912v17M850 912v17M868 912v17M885 912v17M915 912v17M920 912v17M926 912v17M944 912v17M955 912v17M976 912v17M986 912v17M1003 912v17M1016 912v17"/>
<g><text class="bb" x="25" y="925">772,8</text><text class="bb" x="46" y="925">7,5</text><text class="bb" x="64" y="925">3</text><text class="bb" x="100" y="925">2,5</text><text class="bb" x="114" y="925">5</text><text class="bb" x="136" y="925">1,4</text><text class="bb" x="174" y="925">,8</text><text class="bb" x="199" y="925">4</text><text class="bb" x="211" y="925">,8</text><text class="bb" x="220" y="925">5</text><text class="bb" x="233" y="925">3,9</text><text class="bb" x="251" y="925">1,0</text><text class="bb" x="266" y="925">,5</text><text class="bb" x="284" y="925">6,8</text><text class="bb" x="305" y="925">7,2</text><text class="bb" x="325" y="925">9,2</text><text class="bb" x="340" y="925">2</text><text class="bb" x="355" y="925">9,1</text><text class="bb" x="375" y="925">2,9</text><text class="bb" x="393" y="925">5</text><text class="bb" x="405" y="925">3,1</text><text class="bb" x="419" y="925">7</text><text class="bb" x="439" y="925">646,3</text><text class="bb" x="475" y="925">1,9</text><text class="bb" x="489" y="925">4</text><text class="bb" x="500" y="925">4</text><text class="bb" x="514" y="925">6,5</text><text class="bb" x="539" y="925">,3</text><text class="bb" x="571" y="925">3</text><text class="bb" x="586" y="925">,7</text><text class="bb" x="594" y="925">6</text><text class="bb" x="603" y="925">3</text><text class="bb" x="625" y="925">6,8</text><text class="bb" x="644" y="925">,8</text><text class="bb" x="656" y="925">1</text><text class="bb" x="673" y="925">6</text><text class="bb" x="692" y="925">2,8</text><text class="bb" x="703" y="925">4</text><text class="bb" x="711" y="925">2</text><text class="bb" x="721" y="925">,8</text><text class="bb" x="734" y="925">4</text><text class="bb" x="746" y="925">6</text><text class="bb" x="759" y="925">,5</text><text class="bb" x="771" y="925">,1</text><text class="bb" x="781" y="925">3</text><text class="bb" x="796" y="925">6,1</text><text class="bb" x="819" y="925">2</text><text class="bb" x="827" y="925">7</text><text class="bb" x="839" y="925">9,9</text><text class="bb" x="859" y="925">8,0</text><text class="bb" x="877" y="925">9</text><text class="bb" x="895" y="925">50,7</text><text class="bb" x="909" y="925">3</text><text class="bb" x="929" y="925">1</text><text class="bb" x="936" y="925">9</text><text class="bb" x="948" y="925">,5</text><text class="bb" x="968" y="925">45,6</text><text class="bb" x="981" y="925">7</text><text class="bb" x="995" y="925">6,4</text><text class="bb" x="1009" y="925">s</text></g>
<text x="6" y="927" textLength="191" style="font-style:italic;font-size:12px;fill:#b4b4b4">©IT-Finance.com - Données indicatives</text>

<!-- date axis -->
<rect x="5" y="929" width="1093" height="19" fill="#202020"/>
<path d="M37.500 929v4M88.500 929v4M142.500 929v4M196.500 929v4M255.500 929v4M309.500 929v4M367.500 929v4M425.500 929v4M476.500 929v4M536.500 929v4M592.500 929v4M643.500 929v4M699.500 929v4M751.500 929v4M805.500 929v4M859.500 929v4M918.500 929v4M969.500 929v4M1029.500 929v4" stroke="#777"/>
<g><text class="m" x="38" y="945">févr.</text><text class="m" x="88" y="945">mars</text><text class="m" x="142" y="945">avr.</text><text class="m" x="196" y="945">mai</text><text class="m" x="255" y="945">juin</text><text class="m" x="309" y="945">juil.</text><text class="m" x="367" y="945">août</text><text class="m" x="425" y="945">sept.</text><text class="m" x="476" y="945">oct.</text><text class="m" x="536" y="945">nov.</text><text class="m" x="592" y="945">déc.</text><text class="m b" x="643" y="945" style="font-size:12.500px">2019</text><text class="m" x="699" y="945">févr.</text><text class="m" x="751" y="945">mars</text><text class="m" x="805" y="945">avr.</text><text class="m" x="859" y="945">mai</text><text class="m" x="918" y="945">juin</text><text class="m" x="969" y="945">juil.</text><text class="m" x="1029" y="945">août</text></g>
<path d="M5 948.500H1098" stroke="#444"/>
<rect x="5" y="955" width="67" height="3" rx="1" fill="#2a6a9a"/>
<rect x="1018" y="955" width="23" height="3" fill="#777"/>

<!-- y labels chart 3 -->
<path d="M1047 627h5M1047 680h5M1047 706h5M1047 732h5M1047 758h5M1047 784h5M1047 810h5M1047 836h5M1047 862h5M1047 888h5M1047 914h5" stroke="#777"/>
<text x="1054" y="630" class="ax">8 000</text><text x="1054" y="684" class="ax">7 600</text><text x="1054" y="710" class="ax">7 400</text><text x="1054" y="736" class="ax">7 200</text><text x="1054" y="762" class="ax b" style="font-size:12px">7 000</text><text x="1054" y="788" class="ax">6 800</text><text x="1054" y="814" class="ax">6 600</text><text x="1054" y="840" class="ax">6 400</text><text x="1054" y="866" class="ax">6 200</text><text x="1054" y="892" class="ax b" style="font-size:12px">6 000</text><text x="1054" y="918" class="ax">5 800</text>
<rect x="1053" y="630" width="39" height="15" fill="#ffcc00"/><text x="1055" y="642" style="fill:#222" textLength="35">7 928,1</text>
<rect x="1053" y="645" width="35" height="15" fill="#88e088"/><text x="1055" y="657" style="fill:#143" textLength="31">3m45s</text>
<path d="M1047 637.500h6" stroke="#ddd"/>

<rect x="1098" y="24" width="2" height="934" fill="#2a2a2a"/>
<rect x="1103" y="0" width="1" height="958" fill="#333"/>

<!-- RIGHT PANEL -->
<rect x="1104" y="0" width="761" height="46" fill="url(#hd)"/>
<path d="M1104 46.500H1865" stroke="#555"/>
<path d="M1282.500 0V46M1560.500 0V46" stroke="#555"/>
<text x="1135" y="25" class="s11 b w" textLength="119">US Tech 100 Cash (1€)</text>
<text x="1310" y="18" class="s11 b w" textLength="139">Vectorial - US100 v2 (WFE)</text>
<text x="1353" y="32" class="s11 b w" textLength="53">5 minutes</text>
<rect x="1455" y="8.500" width="70.500" height="23" rx="3" fill="#222" stroke="#000"/><text x="1471" y="24" class="s11" textLength="38">Modifier</text>
<text x="1589" y="18" class="s11" textLength="30">Début:</text><text x="1631" y="18" class="s11" textLength="109">16 janv. 2018 01:00:00</text><text x="1746" y="18" class="s11 b w" textLength="57">[1 000,00 €]</text>
<text x="1589" y="32" class="s11" textLength="36">Actuel :</text><text x="1638" y="32" class="s11" textLength="102">24 juil. 2019 15:20:00</text><text x="1746" y="32" class="s11 b w" textLength="57">[4 496,40 €]</text>
<rect x="1815" y="13" width="11" height="7" fill="#ccc"/><rect x="1812" y="20" width="19" height="8" rx="1" fill="#999"/><rect x="1815" y="27" width="13" height="3" fill="#777"/><path d="M1817 15h7M1817 17h7" stroke="#555"/>

<!-- tabs -->
<path d="M1115 77V60q0-3 3-3h55q3 0 3 3v17z" fill="#5c5c5c"/>
<text x="1126" y="72" class="s11" style="fill:#eee" textLength="39">Résumé</text>
<path d="M1177 77V62q0-3 3-3h186q3 0 3 3v15z" fill="#333"/>
<text x="1187" y="72" class="s11" textLength="171">Statistiques des positions clôturées</text>
<path d="M1370 77V62q0-3 3-3h95q3 0 3 3v15z" fill="#333"/>
<text x="1381" y="72" class="s11" textLength="78">Liste des ordres</text>
<path d="M1472 77V62q0-3 3-3h155q3 0 3 3v15z" fill="#333"/>
<text x="1483" y="72" class="s11" textLength="137">Liste des positions clôturées</text>
<rect x="1114.500" y="77.500" width="742" height="854" fill="#282828" stroke="#585858"/>

<text x="1221" y="113" class="s14" textLength="212"><tspan class="w">Gain : </tspan><tspan class="g">3 496,40 € (+349,64 %)</tspan></text>
<text x="1592" y="113" class="s14" textLength="196"><tspan class="w">Gain moyen : </tspan><tspan class="g">26,29 € / trade</tspan></text>
<path d="M1532 98V385" stroke="#000" stroke-width="1"/><path d="M1533 98V385" stroke="#555" stroke-width="1"/>

<text x="1217" y="140" class="s14 g" textLength="35">% de</text><text x="1202" y="158" class="s14 g" textLength="63">positions</text><text x="1199" y="177" class="s14 g" textLength="73">gagnantes</text>
<text x="1385" y="140" class="s14 g" textLength="36">Ratio</text><text x="1360" y="158" class="s14 g" textLength="90">Gains/Pertes</text>

<g transform="translate(1236,242)"><circle r="36" fill="url(#in)"/><circle r="43.500" fill="none" stroke="url(#dg)" stroke-width="15"/><path d="M0-43.500A43.500 43.500 0 0 0-43.500 0" fill="none" stroke="url(#dr)" stroke-width="15"/></g>
<text x="1206" y="248" class="s15 g" textLength="60">75,19 %</text>
<g transform="translate(1406,242)"><circle r="36" fill="url(#in)"/><circle r="43.500" fill="none" stroke="url(#dg)" stroke-width="15"/><path d="M0-43.500A43.500 43.500 0 0 0-40 17" fill="none" stroke="url(#dr)" stroke-width="15"/></g>
<text x="1390" y="248" class="s15 g" textLength="32">2,18</text>

<text x="1182" y="314" class="s14 w" textLength="147">Nb de positions : 133</text>
<rect x="1182.500" y="319.500" width="15" height="15" fill="url(#sqg)" stroke="#2ee02e"/><text x="1204" y="333" class="s14 g" textLength="114">Gagnantes : 100</text>
<rect x="1182.500" y="338.500" width="15" height="15" fill="url(#sqw)" stroke="#bbb"/><text x="1204" y="352" class="s14" style="fill:#bbb" textLength="74">Neutres : 0</text>
<rect x="1182.500" y="357.500" width="15" height="15" fill="url(#sqr)" stroke="#e84040"/><text x="1204" y="371" class="s14 r" textLength="101">Perdantes : 33</text>
<rect x="1352.500" y="300.500" width="15" height="15" fill="url(#sqg)" stroke="#2ee02e"/><text x="1374" y="314" class="s14 g" textLength="74">Gain total :</text><text x="1374" y="333" class="s14 g" textLength="74">6 453,50 €</text>
<rect x="1352.500" y="343.500" width="15" height="15" fill="url(#sqr)" stroke="#e84040"/><text x="1374" y="357" class="s14 r" textLength="88">Perte totale :</text><text x="1374" y="376" class="s14 r" textLength="79">-2 957,10 €</text>

<!-- gain moyen -->
<text x="1646" y="135" class="g" textLength="67">Plus gros gain</text>
<text x="1642.500" y="159" class="s19 g" textLength="75">285,50 €</text>
<rect x="1670.500" y="170.500" width="20" height="81" fill="#1c451c" stroke="#28c828"/>
<rect x="1671" y="233" width="19" height="18" fill="url(#bar)"/><path d="M1670 233.500h21" stroke="#28c828"/>
<rect x="1691.500" y="251.500" width="20" height="42" fill="#522020" stroke="#d84444"/>
<rect x="1692" y="252" width="19" height="24" fill="url(#rb)"/><path d="M1691 276.500h21" stroke="#d84444"/>
<text x="1590" y="209" class="g" textLength="57">Gain moyen</text><text x="1583" y="223" class="g" textLength="63">des positions</text><text x="1599" y="237" class="g" textLength="51">gagnantes</text>
<text x="1585" y="261" class="s19 g" textLength="65">64,53 €</text>
<path d="M1653 233.500h15M1665 231l4 2.500-4 2.500" stroke="#2fbf2f" fill="none"/>
<text x="1733" y="214" class="r" textLength="25">Perte</text><text x="1733" y="228" class="r" textLength="64">moyenne des</text><text x="1733" y="242" class="r" textLength="43">positions</text><text x="1733" y="256" class="r" textLength="49">perdantes</text>
<text x="1733" y="280" class="s19 r" textLength="71">-89,61 €</text>
<path d="M1729 276.500h-16M1717 274l-4 2.500 4 2.500" stroke="#e23c3c" fill="none"/>
<text x="1659" y="311" class="r" textLength="85">Plus grosse perte</text>
<text x="1659" y="335" class="s19 r" textLength="82">-149,10 €</text>

<path d="M1135 405.500H1836M1135 509.500H1836" stroke="#000"/><path d="M1135 406.500H1836M1135 510.500H1836" stroke="#4c4c4c"/>

<!-- drawdown -->
<g transform="translate(1130,400) scale(.45914,.33333)" fill="none">
<path d="M118 85L128 143 142 127 150 170 162 145 182 225 192 212 202 185 214 170 222 135 234 195 246 212 256 265V268H118Z" fill="url(#ddf)" stroke="none"/>
<polyline class="ns" stroke="#8a8a94" stroke-width="1.300" points="88,198 100,135 118,85"/><polyline class="ns" stroke="#8a8a94" stroke-width="1.300" points="256,265 266,175 278,157 285,115 295,128"/>
<polyline class="ns" stroke="#e02c2c" stroke-width="1.600" points="118,85 128,143 142,127 150,170 162,145 182,225 192,212 202,185 214,170 222,135 234,195 246,212 256,265"/>
<path class="ns" stroke="#9a9aa4" stroke-width="1" d="M105 82H318M105 268H318M313 86V264"/>
<path d="M306 105L313 86 320 105ZM306 245L313 264 320 245Z" fill="#9a9aa4"/>
<path d="M888 265L900 207 913 223 922 180 932 205 942 185 952 125 963 138 974 165 985 178 995 215 1005 155 1015 138 1025 85V268H888Z" fill="url(#ruf)" stroke="none"/>
<polyline class="ns" stroke="#8a8a94" stroke-width="1.300" points="859,152 870,210 888,265"/><polyline class="ns" stroke="#8a8a94" stroke-width="1.300" points="1025,85 1037,178 1048,192 1056,235 1066,222"/>
<polyline class="ns" stroke="#2cba2c" stroke-width="1.600" points="888,265 900,207 913,223 922,180 932,205 942,185 952,125 963,138 974,165 985,178 995,215 1005,155 1015,138 1025,85"/>
<path class="ns" stroke="#9a9aa4" stroke-width="1" d="M875 82H1088M875 268H1088M1083 86V264"/>
<path d="M1076 105L1083 86 1090 105ZM1076 245L1083 264 1090 245Z" fill="#9a9aa4"/>
</g>
<text x="1296" y="447" class="s14" textLength="113">Drawdown max :</text><text x="1296" y="466" class="s14 r" textLength="61">486,00 €</text><text x="1296" y="481" class="s11" style="fill:#ccd" textLength="153">Nb max pertes consécutives : 3</text>
<text x="1650" y="447" class="s14" textLength="80">Runup max:</text><text x="1650" y="466" class="s14 g" textLength="74">3 625,90 €</text><text x="1650" y="481" class="s11" style="fill:#ccd" textLength="146">Nb max gains consécutifs : 13</text>

<!-- temps -->
<text x="1144" y="580" class="s14" textLength="86">Temps dans</text><text x="1155" y="598" class="s14" textLength="68">le marché</text>
<g transform="translate(1188,664)"><circle r="36" fill="url(#in)"/><path d="M0-43.500A43.500 43.500 0 0 0-1 43.500" fill="none" stroke="url(#dk)" stroke-width="15"/><path d="M0-43.500A43.500 43.500 0 0 1-1 43.500" fill="none" stroke="url(#dm)" stroke-width="15"/></g>
<text x="1158" y="670" class="s15 w" textLength="60">50,34 %</text>
<path d="M1135 739H1243" stroke="#000"/>
<path d="M1264 532V911" stroke="#000"/>
<text x="1142" y="770" class="s14" textLength="89">Moy d'ordres</text><text x="1154" y="789" class="s14" textLength="69">exécutés :</text>
<path d="M1138.500 800.500H1179L1204 826V879.500H1138.500Z" fill="url(#doc)" stroke="#9aa5b5"/>
<path d="M1179 800.500L1178 818 1204 826" fill="#58626e" stroke="#9aa5b5"/>
<path d="M1154 807h10v16h7l-12 14-12-14h7z" fill="#ee3d3d" stroke="#a01818"/>
<path d="M1159 843l12 14h-7v16h-10v-16h-7z" fill="#42d842" stroke="#1a8c1a"/>
<rect x="1179.500" y="826.500" width="60" height="50" rx="4" fill="#2a3440" stroke="#8a95a5"/>
<text x="1191" y="850" class="s19 w" style="font-size:17px" textLength="36">0,68</text>
<text x="1191" y="868" class="s11 w" textLength="36">par jour</text>

<!-- perf chart -->
<text x="1429" y="550" class="s14" textLength="129">Performance brute</text>
<rect x="1561.500" y="533.500" width="133" height="25" rx="3" fill="#111" stroke="#444"/>
<text x="1565" y="551" class="s14 w" textLength="84">Trimestrielle</text>
<rect x="1671" y="535" width="21" height="21" rx="2" fill="#2c2c2c"/><path d="M1676 543h11l-5.500 6z" fill="#eee"/>
<rect x="1285.500" y="574.500" width="522" height="317" fill="none" stroke="#5a5a5a"/>
<path stroke="#4e4e4e" d="M1285 600.500H1807M1285 630.500H1807M1285 661.500H1807M1285 692.500H1807M1285 754.500H1807M1285 784.500H1807M1285 815.500H1807M1285 846.500H1807"/>
<path stroke="#7a7a7a" d="M1285 723.500H1807"/>
<path stroke="#4e4e4e" d="M1324.500 574V891M1399.500 574V891M1473.500 574V891M1548.500 574V891M1696.500 574V891M1771.500 574V891"/>
<path stroke="#7a7a7a" d="M1622.500 574V891"/>
<path stroke="#777" d="M1323.500 891v4M1398.500 891v4M1472.500 891v4M1547.500 891v4M1622.500 891v4M1695.500 891v4M1770.500 891v4M1807 600.500h4M1807 630.500h4M1807 661.500h4M1807 692.500h4M1807 723.500h4M1807 754.500h4M1807 784.500h4M1807 815.500h4M1807 846.500h4"/>
<g fill="url(#bar)" stroke="#2fd42f">
<rect x="1315.500" y="589.500" width="18" height="287"/><rect x="1390.500" y="748.500" width="18" height="128"/><rect x="1464.500" y="696.500" width="18" height="180"/><rect x="1539.500" y="610.500" width="18" height="266"/><rect x="1613.500" y="797.500" width="18" height="79"/><rect x="1687.500" y="747.500" width="18" height="129"/><rect x="1762.500" y="872.500" width="18" height="4"/>
</g>
<path d="M1285 877.500H1807" stroke="#3434c8" stroke-width="1.500"/>
<g><text x="1813" y="604">900</text><text x="1813" y="634">800</text><text x="1813" y="665">700</text><text x="1813" y="696">600</text><text x="1813" y="727" class="b" style="font-size:12px">500</text><text x="1813" y="758">400</text><text x="1813" y="788">300</text><text x="1813" y="819">200</text><text x="1813" y="850">100</text></g>
<g><text class="m" x="1322" y="908">janv.</text><text class="m" x="1398" y="908">avr.</text><text class="m" x="1472" y="908">juil.</text><text class="m" x="1546" y="908">oct.</text><text class="m b" x="1620" y="908" style="font-size:12.500px">2019</text><text class="m" x="1695" y="908">avr.</text><text class="m" x="1770" y="908">juil.</text></g>

<!-- status -->
<path d="M1104 943.500H1865" stroke="#4a4a4a"/>
<rect x="1104" y="944" width="761" height="14" fill="#141414"/>
<text x="1108" y="956" textLength="526" style="fill:#c8c8c8;font-size:11.500px">Les statistiques ci-dessus sont relatives au passé. Les performances passées ne présagent pas de l'avenir.</text>
<rect x="1865" y="0" width="9" height="958" fill="#030303"/>
<path d="M1870 42l3 4-3 4zM1870 51l3 4-3 4z" fill="#ccc"/>
</svg>
</body></html>
